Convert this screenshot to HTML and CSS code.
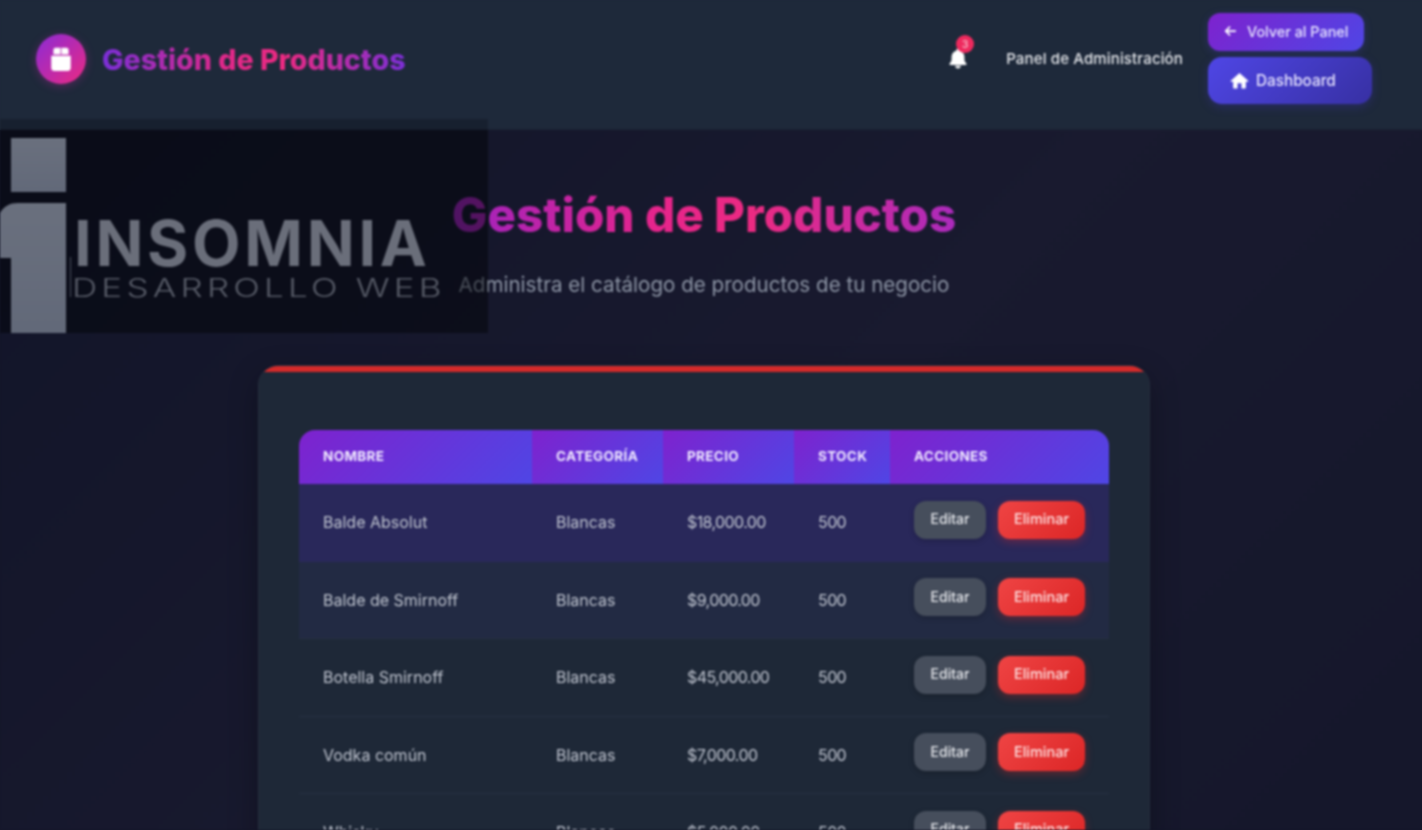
FILE: index.html
```html
<!DOCTYPE html>
<html lang="es">
<head>
<meta charset="utf-8">
<title>Gestión de Productos</title>
<link rel="stylesheet" href="styles.css">
</head>
<body>
<div class="app">
  <header class="topbar">
    <div class="brand">
      <span class="brand-icon">
        <svg viewBox="0 0 24 24" width="26" height="26"><path fill="#fff" d="M3 9h18v11a3 3 0 0 1-3 3H6a3 3 0 0 1-3-3zM7 1.500h4.600V7.800H5V3.500a2 2 0 0 1 2-2zM12.400 1.500H17a2 2 0 0 1 2 2v4.300h-6.600z"/></svg>
      </span>
      <span class="brand-name">Gestión de Productos</span>
    </div>
    <div class="top-right">
      <span class="bell">
        <svg viewBox="0 0 24 24" width="22" height="22"><path fill="#fff" d="M12 1.500a1.700 1.700 0 0 0-1.700 1.700v.8C7 4.700 5 7.400 5 10.500v3.200c0 1.600-.8 3-2 4.100-.7.700-.3 1.700.6 1.700h16.800c.9 0 1.300-1 .6-1.700-1.200-1.100-2-2.500-2-4.100v-3.200c0-3.100-2-5.800-5.300-6.500v-.8A1.700 1.700 0 0 0 12 1.500zM9 20.500a3 3 0 0 0 6 0z"/></svg>
        <span class="badge">3</span>
      </span>
      <span class="role">Panel de Administración</span>
      <nav class="top-actions">
        <a class="nav-btn nav-back">
          <svg viewBox="0 0 16 16" width="14" height="14"><path fill="none" stroke="#fff" stroke-width="2" stroke-linecap="round" stroke-linejoin="round" d="M14 8H3M7.500 3.500 3 8l4.500 4.500"/></svg>
          Volver al Panel
        </a>
        <a class="nav-btn nav-home">
          <svg viewBox="0 0 24 24" width="19" height="19"><path fill="#fff" d="M12 2.500 1 12.300c-.5.500-.2 1.200.5 1.200H4v7.500c0 .6.400 1 1 1h4.500v-6.500h5V22H19c.6 0 1-.4 1-1v-7.500h2.500c.7 0 1-.7.5-1.200z"/></svg>
          Dashboard
        </a>
      </nav>
    </div>
  </header>

  <main class="content">
    <h1 class="page-title">Gestión de Productos</h1>
    <p class="page-sub">Administra el catálogo de productos de tu negocio</p>

    <section class="card">
      <div class="table">
        <div class="row row-head">
          <div class="th">NOMBRE</div><div class="th">CATEGORÍA</div><div class="th">PRECIO</div><div class="th">STOCK</div><div class="th">ACCIONES</div>
        </div>
        <div class="row row-active">
          <div class="td">Balde Absolut</div><div class="td">Blancas</div><div class="td td-num">$18,000.00</div><div class="td td-num">500</div>
          <div class="td-actions"><a class="btn btn-edit">Editar</a><a class="btn btn-del">Eliminar</a></div>
        </div>
        <div class="row row-fading">
          <div class="td">Balde de Smirnoff</div><div class="td">Blancas</div><div class="td td-num">$9,000.00</div><div class="td td-num">500</div>
          <div class="td-actions"><a class="btn btn-edit">Editar</a><a class="btn btn-del">Eliminar</a></div>
        </div>
        <div class="row">
          <div class="td">Botella Smirnoff</div><div class="td">Blancas</div><div class="td td-num">$45,000.00</div><div class="td td-num">500</div>
          <div class="td-actions"><a class="btn btn-edit">Editar</a><a class="btn btn-del">Eliminar</a></div>
        </div>
        <div class="row">
          <div class="td">Vodka común</div><div class="td">Blancas</div><div class="td td-num">$7,000.00</div><div class="td td-num">500</div>
          <div class="td-actions"><a class="btn btn-edit">Editar</a><a class="btn btn-del">Eliminar</a></div>
        </div>
        <div class="row">
          <div class="td">Whisky</div><div class="td">Blancas</div><div class="td td-num">$5,000.00</div><div class="td td-num">500</div>
          <div class="td-actions"><a class="btn btn-edit">Editar</a><a class="btn btn-del">Eliminar</a></div>
        </div>
      </div>
    </section>
  </main>

  <aside class="watermark">
    <svg class="wm-mark" viewBox="0 0 71 215" width="71" height="215">
      <defs><linearGradient id="wmGrad" x1="0" y1="0" x2="0" y2="1"><stop offset="0" stop-color="#6a707e"/><stop offset="1" stop-color="#626979"/></linearGradient></defs>
      <rect x="11" y="19" width="55" height="54" fill="url(#wmGrad)"/>
      <path fill="url(#wmGrad)" d="M0 94C4 87 10 84 18 84H66V214H11V139H0z"/>
      <rect x="70" y="138" width="1" height="40" fill="#4a4f5c"/>
    </svg>
    <div class="wm-text">
      <span class="wm-name">INSOMNIA</span>
      <span class="wm-tag">DESARROLLO WEB</span>
    </div>
  </aside>
</div>
</body>
</html>
```
FILE: styles.css
```css
* { box-sizing: border-box; }
html, body { margin: 0; padding: 0; height: 100%; }
body {
  font-family: Inter, "Noto Sans", "Liberation Sans", sans-serif; color: #fff; overflow: hidden;
  background: linear-gradient(#1e293a 130px, #141628 130px);
}

.app {
  position: relative;
  height: 830px;
  overflow: hidden;
  background: linear-gradient(135deg, #111428 0%, #191a2f 55%, #15172b 100%);
  filter: blur(1px);
}

/* top bar */
.topbar {
  height: 130px;
  padding: 13px 50px 0 36px;
  display: flex;
  align-items: flex-start;
  justify-content: space-between;
  background: #1e293a;
  border-bottom: 1px solid #1a2232;
}
.brand { display: flex; align-items: center; gap: 16px; height: 92px; }
.brand-icon {
  width: 50px; height: 50px; border-radius: 50%;
  display: flex; align-items: center; justify-content: center;
  background: linear-gradient(135deg, #8b2bd6, #ec2a82);
  box-shadow: 0 2px 10px rgba(190, 40, 160, .35);
}
.brand-name {
  font-size: 28.600px; font-weight: 800;
  background: linear-gradient(90deg, #7b2fd8 0%, #e0288a 40%, #ec2a82 60%, #7b2fd8 100%);
  -webkit-background-clip: text; background-clip: text; color: transparent;
}
.top-right { display: flex; align-items: flex-start; }
.bell { position: relative; width: 22px; height: 22px; margin-top: 34px; margin-right: 37px; }
.bell svg { display: block; }
.badge {
  position: absolute; top: -12px; left: 9px;
  width: 18px; height: 18px; border-radius: 50%;
  background: #ee2a5e; color: #f8b4c4;
  font-size: 10px; font-weight: 600; line-height: 18px; text-align: center;
}
.role { font-size: 15px; font-weight: 500; color: #e5e7eb; line-height: 20px; margin-top: 36px; margin-right: 25px; letter-spacing: .15px; }
.top-actions { display: flex; flex-direction: column; align-items: flex-start; gap: 6px; }
.nav-btn {
  display: flex; align-items: center; color: #e9e6ff; font-weight: 500;
}
.nav-back {
  width: 156px; height: 38px; padding: 0 0 2px 15px; gap: 10px; font-size: 14.400px;
  border-radius: 12px;
  background: linear-gradient(135deg, #7e22ce, #4f46e5);
  box-shadow: 0 2px 8px rgba(79, 70, 229, .25);
}
.nav-home {
  width: 164px; height: 47px; padding-left: 22px; gap: 7px; font-size: 15.300px;
  border-radius: 14px;
  background: linear-gradient(135deg, #4f46e5, #3730a3);
  box-shadow: 0 3px 10px rgba(55, 48, 163, .4);
}

/* page heading */
.content { padding: 57px 14px 0 0; display: flex; flex-direction: column; align-items: center; }
.page-title {
  margin: 0; font-size: 47.500px; font-weight: 800; line-height: 56px;
  background: linear-gradient(90deg, #9d23c0 0%, #e6248c 40%, #ec2a82 60%, #ab2abc 100%);
  -webkit-background-clip: text; background-clip: text; color: transparent;
}
.page-sub { margin: 29px 0 0; font-size: 20.600px; line-height: 26px; color: #8d95a5; }

/* card + table */
.card {
  position: relative;
  width: 892px;
  margin-top: 67px;
  padding: 64px 40px 0;
  border-radius: 20px;
  overflow: hidden;
  background: #1e2837;
  border: 1px solid #252d3d;
  box-shadow: 0 10px 30px rgba(0, 0, 0, .3);
}
.card::before {
  content: ""; position: absolute; top: -1px; left: -1px; right: -1px; height: 7px;
  background: #d42a2a;
}
.table { border-radius: 16px 16px 0 0; overflow: hidden; }
.row {
  display: grid;
  grid-template-columns: 233px 131px 131px 96px 1fr;
  height: 77.500px;
  align-items: center;
  border-bottom: 1px solid #263042;
}
.row-head { height: 54px; border-bottom: 0; }
.row-active { background: #29285a; border-bottom-color: #29285a; }
.row-fading { background: #222a43; }
.th {
  height: 100%; padding: 0 0 2px 24px;
  display: flex; align-items: center;
  background: linear-gradient(135deg, #7e22ce, #4f46e5);
  font-size: 13.500px; font-weight: 700; letter-spacing: .35px; color: #f1eaff;
}
.td { padding-left: 24px; font-size: 16px; color: #c0c5d0; }
.td-num { letter-spacing: -.6px; }
.td-actions { display: flex; gap: 12px; padding: 0 0 5px 24px; }
.btn {
  height: 38px; display: flex; align-items: center; justify-content: center;
  border-radius: 12px; font-size: 14px; font-weight: 500; padding-bottom: 2px;
}
.btn-edit { width: 72px; background: #464e5c; color: #e5e7eb; box-shadow: 0 2px 6px rgba(0,0,0,.2); }
.btn-del { width: 87px; background: linear-gradient(135deg, #ef4444, #dc2626); color: #fde2e2; font-size: 14.500px; box-shadow: 0 3px 8px rgba(220,38,38,.35); }

/* watermark floating over the page */
.watermark {
  position: absolute; left: 0; top: 119px; width: 488px; height: 214px;
  background: linear-gradient(rgba(5,7,15,.25) 0, rgba(5,7,15,.25) 11px, rgba(2,4,8,.5) 11px);
  display: flex;
}
.wm-mark { display: block; flex: none; }
.wm-text { display: flex; flex-direction: column; padding: 96px 0 0 3px; }
.wm-name { font-size: 63px; line-height: 56px; font-weight: 700; letter-spacing: 3.700px; color: #6a6e7a; }
.wm-tag {
  font-size: 25px; line-height: 26px; margin: 4px 0 0 -2px; font-weight: 300; letter-spacing: 3px;
  color: #585c68; white-space: nowrap; transform: scaleX(1.4); transform-origin: left center;
}
```
